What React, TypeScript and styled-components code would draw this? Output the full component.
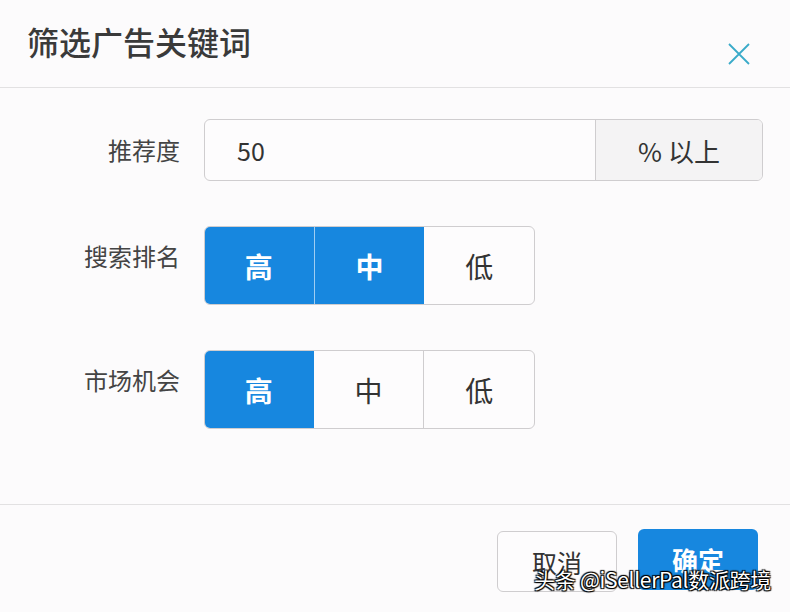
import React from "react";
import styled, { createGlobalStyle } from "styled-components";

const GlobalStyle = createGlobalStyle`
  html, body {
    margin: 0;
    padding: 0;
    background: #fcfbfc;
  }
  * {
    box-sizing: border-box;
  }
`;

const FONT = `"Noto Sans CJK SC", "Noto Sans", "Liberation Sans", sans-serif`;
const BLUE = "#1787df";

type Level = "高" | "中" | "低";
const LEVELS: Level[] = ["高", "中", "低"];

const rows: { label: string; active: Level[] }[] = [
  { label: "搜索排名", active: ["高", "中"] },
  { label: "市场机会", active: ["高"] },
];

export default function App() {
  return (
    <>
      <GlobalStyle />
      <Dialog>
        <Header>
          <Title>筛选广告关键词</Title>
          <CloseButton aria-label="关闭">
            <svg width="22" height="22" viewBox="0 0 22 22">
              <path
                d="M1 1 L21 21 M21 1 L1 21"
                stroke="#3aaac9"
                strokeWidth="1.8"
                fill="none"
              />
            </svg>
          </CloseButton>
        </Header>

        <Body>
          <Row>
            <Label $center>推荐度</Label>
            <InputGroup>
              <Input defaultValue="50" />
              <Addon>% 以上</Addon>
            </InputGroup>
          </Row>

          {rows.map((row) => (
            <Row key={row.label}>
              <Label>{row.label}</Label>
              <ButtonGroup>
                {LEVELS.map((lv, i) => {
                  const on = row.active.includes(lv);
                  const prevOn = i > 0 && row.active.includes(LEVELS[i - 1]);
                  return (
                    <Toggle key={lv} $on={on} $prevOn={prevOn} $first={i === 0}>
                      {lv}
                    </Toggle>
                  );
                })}
              </ButtonGroup>
            </Row>
          ))}
        </Body>

        <Footer>
          <CancelButton>取消</CancelButton>
          <OkButton>确定</OkButton>
        </Footer>

        <Watermark>头条 @iSellerPal数派跨境</Watermark>
      </Dialog>
    </>
  );
}

const Dialog = styled.div`
  position: relative;
  width: 790px;
  height: 612px;
  overflow: hidden;
  background: #fcfbfc;
  font-family: ${FONT};
  color: #333;
`;

const Header = styled.div`
  height: 88px;
  display: flex;
  align-items: flex-start;
  justify-content: space-between;
  padding: 18px 40px 0 27px;
  border-bottom: 1px solid #e2e1e2;
`;

const Title = styled.h1`
  margin: 0;
  font-size: 32px;
  line-height: 46px;
  font-weight: 500;
  color: #3a3a3a;
`;

const CloseButton = styled.button`
  margin-top: 25px;
  width: 22px;
  height: 22px;
  padding: 0;
  border: none;
  background: transparent;
  display: flex;
`;

const Body = styled.div`
  height: 417px;
  padding-top: 31px;
  display: flex;
  flex-direction: column;
  gap: 45px;
  border-bottom: 1px solid #e2e1e2;
`;

const Row = styled.div`
  display: flex;
  gap: 24px;
  align-items: flex-start;
`;

const Label = styled.div<{ $center?: boolean }>`
  width: 180px;
  text-align: right;
  font-size: 24px;
  line-height: 30px;
  color: #444;
  padding-top: ${(p) => (p.$center ? "16px" : "15px")};
`;

const InputGroup = styled.div`
  display: flex;
  width: 559px;
  height: 62px;
  border: 1px solid #cfcdcf;
  border-radius: 6px;
  overflow: hidden;
  background: #fdfcfd;
`;

const Input = styled.input`
  flex: 1;
  min-width: 0;
  border: none;
  outline: none;
  background: transparent;
  padding: 0 0 0 32px;
  font-family: ${FONT};
  font-size: 25px;
  color: #333;
`;

const Addon = styled.div`
  width: 167px;
  display: flex;
  align-items: center;
  justify-content: center;
  border-left: 1px solid #cfcdcf;
  background: #f4f3f4;
  font-size: 26px;
  color: #333;
`;

const ButtonGroup = styled.div`
  display: flex;
  width: 331px;
  height: 79px;
  border: 1px solid #cfcdcf;
  border-radius: 6px;
  overflow: hidden;
  background: #fdfcfd;
`;

const Toggle = styled.button<{ $on: boolean; $prevOn: boolean; $first: boolean }>`
  flex: 1;
  margin: ${(p) => (p.$on ? "-1px 0" : "0")};
  margin-left: ${(p) => (p.$first && p.$on ? "-1px" : "0")};
  border: none;
  border-left: ${(p) =>
    p.$first
      ? "none"
      : p.$on && p.$prevOn
      ? "1px solid #9fcdf2"
      : !p.$on && !p.$prevOn
      ? "1px solid #cfcdcf"
      : "none"};
  background: ${(p) => (p.$on ? BLUE : "transparent")};
  color: ${(p) => (p.$on ? "#fff" : "#333")};
  font-family: ${FONT};
  font-size: 28px;
  font-weight: ${(p) => (p.$on ? 700 : 400)};
  padding: 0;
`;

const Footer = styled.div`
  display: flex;
  justify-content: flex-end;
  gap: 21px;
  padding: 24px 32px 0 0;
`;

const FooterButton = styled.button`
  width: 120px;
  height: 61px;
  border-radius: 6px;
  font-family: ${FONT};
  font-size: 25px;
  padding: 0;
`;

const CancelButton = styled(FooterButton)`
  margin-top: 2px;
  border: 1px solid #cfcdcf;
  background: #fdfcfd;
  color: #333;
`;

const OkButton = styled(FooterButton)`
  border: none;
  background: ${BLUE};
  color: #fff;
  font-size: 26px;
  font-weight: 700;
`;

const Watermark = styled.div`
  position: absolute;
  right: 19px;
  bottom: 20px;
  font-size: 21px;
  line-height: 26px;
  color: #fff;
  letter-spacing: -0.3px;
  text-shadow: 0 0 1px #000, 1px 1px 1px #000, -1px -1px 1px #000,
    1px -1px 1px #000, -1px 1px 1px #000;
`;
